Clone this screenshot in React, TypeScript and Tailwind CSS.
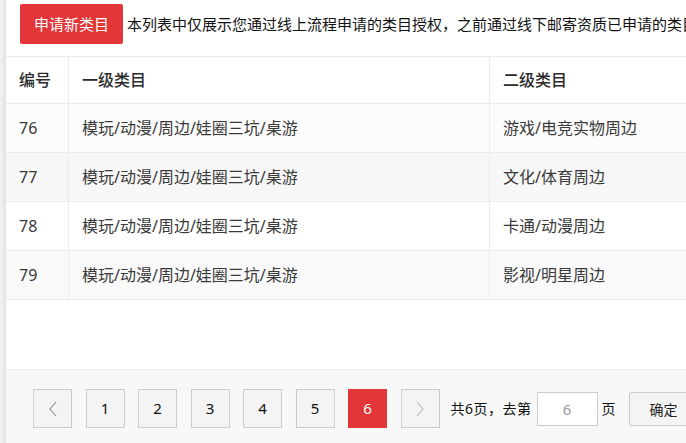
import React from "react";

const rows = [
  { id: 76, first: "模玩/动漫/周边/娃圈三坑/桌游", second: "游戏/电竞实物周边", bg: "bg-[#fcfcfc]" },
  { id: 77, first: "模玩/动漫/周边/娃圈三坑/桌游", second: "文化/体育周边", bg: "bg-[#f7f7f7]" },
  { id: 78, first: "模玩/动漫/周边/娃圈三坑/桌游", second: "卡通/动漫周边", bg: "bg-white" },
  { id: 79, first: "模玩/动漫/周边/娃圈三坑/桌游", second: "影视/明星周边", bg: "bg-[#f9f9f9]" },
];

const pages = [1, 2, 3, 4, 5, 6];

export default function App() {
  return (
    <div
      className="w-[686px] h-[443px] overflow-hidden flex bg-white"
      style={{ fontFamily: '"Noto Sans", "Noto Sans CJK SC", sans-serif' }}
    >
      {/* left shadow strip */}
      <div className="w-[6px] shrink-0 bg-gradient-to-r from-[#f3f3f3] to-[#e6e6e6] border-r border-[#e2e2e2]" />

      <div className="flex flex-col w-[900px] shrink-0">
        {/* Toolbar */}
        <div className="h-[57px] flex items-start pt-[4px] pl-[14px] border-b border-[#ececec]">
          <button className="h-[40px] w-[103px] rounded-[2px] bg-[#e23638] text-white text-[15px] leading-none">
            申请新类目
          </button>
          <p className="ml-[4px] mt-[9px] text-[15px] leading-[22px] text-[#111] whitespace-nowrap">
            本列表中仅展示您通过线上流程申请的类目授权，之前通过线下邮寄资质已申请的类目授权请联系客服查询
          </p>
        </div>

        {/* Table */}
        <div className="text-[16px]">
          <div className="flex h-[47px] items-center border-b border-[#ececec] bg-white text-[#2b2b2b] font-medium">
            <div className="w-[63px] h-full flex items-center pl-[13px] border-r border-[#ececec]">编号</div>
            <div className="w-[421px] h-full flex items-center pl-[13px] border-r border-[#ececec]">一级类目</div>
            <div className="flex-1 h-full flex items-center pl-[13px]">二级类目</div>
          </div>
          {rows.map((r) => (
            <div key={r.id} className={`flex h-[49px] border-b border-[#ececec] text-[#3a3a3a] ${r.bg}`}>
              <div className="w-[63px] h-full flex items-center pl-[13px] border-r border-[#ececec]">{r.id}</div>
              <div className="w-[421px] h-full flex items-center pl-[13px] border-r border-[#ececec]">{r.first}</div>
              <div className="flex-1 h-full flex items-center pl-[13px]">{r.second}</div>
            </div>
          ))}
        </div>

        <div className="h-[69px] bg-white" />

        {/* Pagination */}
        <div className="flex-1 bg-[#f8f8f8] border-t border-[#ececec] flex items-start pt-[19px] pl-[27px] text-[14px] text-[#222]">
          <button className="w-[39px] h-[39px] bg-[#f4f4f4] border border-[#cccccc] flex items-center justify-center text-[#888]">
            <svg width="10" height="16" viewBox="0 0 10 16" fill="none" stroke="#8a8a8a" strokeWidth="1.1">
              <path d="M8 1 L2 8 L8 15" />
            </svg>
          </button>
          {pages.map((p) => (
            <button
              key={p}
              className={
                p === 6
                  ? "ml-[13.5px] w-[39px] h-[39px] bg-[#e23638] border border-[#e23638] text-white text-[15px]"
                  : "ml-[13.5px] w-[39px] h-[39px] bg-[#f4f4f4] border border-[#cccccc] text-[#111] text-[15px]"
              }
            >
              {p}
            </button>
          ))}
          <button className="ml-[13.5px] w-[39px] h-[39px] bg-[#f4f4f4] border border-[#cccccc] flex items-center justify-center">
            <svg width="10" height="16" viewBox="0 0 10 16" fill="none" stroke="#b5b5b5" strokeWidth="1.1">
              <path d="M2 1 L8 8 L2 15" />
            </svg>
          </button>
          <span className="ml-[11px] w-[82px] h-[39px] flex items-center whitespace-nowrap text-[#111] tracking-[0.5px]">
            共6页，去第
          </span>
          <div className="ml-[4px] mt-[3px] w-[61px] h-[34px] bg-white border border-[#cccccc] flex items-center justify-center text-[#999] text-[15px]">
            6
          </div>
          <span className="ml-[4px] h-[39px] flex items-center text-[#111]">页</span>
          <button className="ml-[13px] mt-[3px] w-[70px] h-[34px] bg-[#f4f4f4] border border-[#cccccc] rounded-[2px] text-[#222] whitespace-nowrap text-left pl-[20px]">
            确定
          </button>
        </div>
      </div>
    </div>
  );
}
